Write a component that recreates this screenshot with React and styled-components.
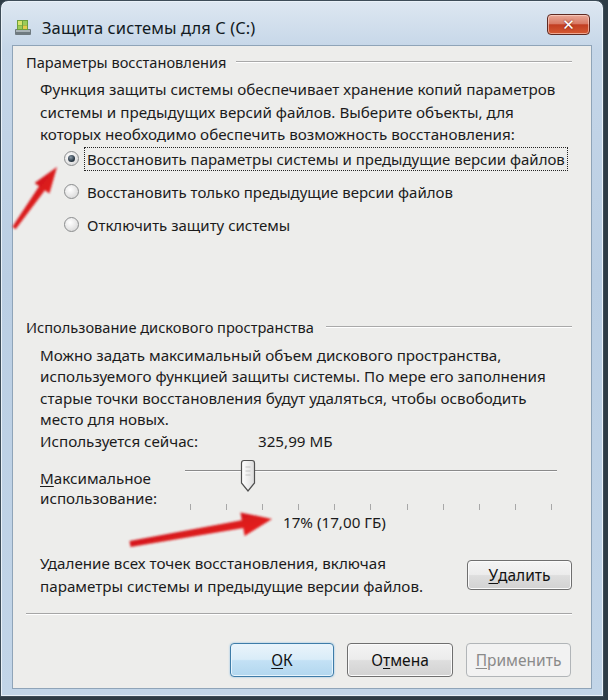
import React from "react";
import styled, { createGlobalStyle, css } from "styled-components";

const GlobalStyle = createGlobalStyle`
  html, body {
    margin: 0;
    padding: 0;
    background: #2e3c46;
  }
  body {
    width: 608px;
    height: 700px;
    overflow: hidden;
    position: relative;
    font-family: "Noto Sans", "Open Sans", sans-serif;
    color: #1b1b1b;
  }
`;

const Window = styled.div`
  width: 604px;
  height: 697px;
  box-sizing: border-box;
  border: 1px solid #3d4c58;
  border-radius: 8px 8px 0 0;
  background: linear-gradient(
    180deg,
    #dde7f1 0%,
    #c5d6e8 7%,
    #bacee3 40%,
    #c2d5e8 100%
  );
  box-shadow: inset 0 0 0 1px #e9f1f8;
  display: flex;
  flex-direction: column;
  padding: 0 11px 7px;
`;

const TitleBar = styled.div`
  height: 44px;
  flex: none;
  display: flex;
  align-items: flex-start;
  padding-left: 2px;
`;

const TitleIcon = styled.svg`
  width: 18px;
  height: 18px;
  margin-top: 17px;
  flex: none;
`;

const TitleText = styled.div`
  margin: 15px 0 0 10px;
  font-size: 16.5px;
  color: #121a22;
  letter-spacing: 0.1px;
`;

const CloseButton = styled.div`
  margin: 13px 2px 0 auto;
  width: 43px;
  height: 21px;
  box-sizing: border-box;
  border: 1px solid #5e2a22;
  border-radius: 4px;
  background: linear-gradient(
    180deg,
    #e9a897 0%,
    #d97b66 45%,
    #c23e22 52%,
    #d55a33 100%
  );
  box-shadow: inset 0 0 0 1px rgba(255, 220, 210, 0.6);
  display: flex;
  align-items: center;
  justify-content: center;
  color: #fff;
  font-family: "DejaVu Sans", sans-serif;
  font-weight: bold;
  font-size: 15px;
  text-shadow: 0 0 2px #6e1a0c;
`;

const Client = styled.div`
  flex: 1;
  background: #ededeb;
  border: 1px solid #8fa4b8;
  padding: 6px 19px 0 13px;
  display: flex;
  flex-direction: column;
  font-size: 15.2px;
`;

const GroupHeader = styled.div`
  display: flex;
  align-items: center;
  height: 20px;
  font-size: 14.6px;
  margin-top: ${(p) => p.$top}px;
  &::after {
    content: "";
    flex: 1;
    margin-left: ${(p) => p.$gap}px;
    height: 1px;
    background: #a9a9a9;
    border-bottom: 1px solid #ffffff;
  }
`;

const Paragraph = styled.p`
  margin: ${(p) => p.$top}px 0 0 14px;
  line-height: ${(p) => p.$lh || 22}px;
  white-space: nowrap;
`;

const RadioList = styled.div`
  margin: 1px 0 0 38px;
  display: flex;
  flex-direction: column;
  gap: 9px;
`;

const RadioRow = styled.label`
  display: flex;
  align-items: center;
  gap: 5px;
  height: 24px;
  font-size: 15px;
  white-space: nowrap;
`;

const RadioCircle = styled.span`
  position: relative;
  flex: none;
  width: 13px;
  height: 13px;
  border-radius: 50%;
  border: 1px solid #8b8d8e;
  background: radial-gradient(
    circle at 40% 35%,
    #ffffff 0%,
    #e6e6e6 55%,
    #cfcfcf 100%
  );
  ${(p) =>
    p.$checked &&
    css`
      &::after {
        content: "";
        position: absolute;
        left: 3px;
        top: 3px;
        width: 7px;
        height: 7px;
        border-radius: 50%;
        background: radial-gradient(
          circle at 40% 35%,
          #8a9aa8 0%,
          #2b3a46 60%,
          #101820 100%
        );
      }
    `}
`;

const RadioText = styled.span`
  padding: 1px 2px;
  line-height: 20px;
  border: 1px ${(p) => (p.$focus ? "dotted #222" : "solid transparent")};
`;

const UsedRow = styled.div`
  display: flex;
  margin: -1px 0 0 14px;
  line-height: 22px;
`;

const UsedLabel = styled.span`
  width: 218px;
`;

const SliderRow = styled.div`
  display: flex;
  margin: 7px 0 0 14px;
`;

const SliderLabel = styled.div`
  width: 145px;
  padding-top: 9px;
  line-height: 20px;
`;

const SliderArea = styled.div`
  position: relative;
  width: 372px;
  height: 54px;
`;

const Track = styled.div`
  position: absolute;
  left: 0;
  right: 0;
  top: 11px;
  height: 1px;
  background: #8a8a8a;
  border-bottom: 1px solid #fbfbfb;
`;

const Thumb = styled.svg`
  position: absolute;
  top: 0;
  width: 16px;
  height: 34px;
`;

const Ticks = styled.div`
  position: absolute;
  left: 5px;
  right: 5px;
  top: 45px;
  display: flex;
  justify-content: space-between;
`;

const Tick = styled.span`
  width: 1px;
  height: 6px;
  background: #a8a8a8;
`;

const Percent = styled.div`
  margin: -2px 0 0 257px;
  line-height: 22px;
`;

const DeleteRow = styled.div`
  display: flex;
  align-items: center;
  justify-content: space-between;
  margin: 19px 0 0 14px;
`;

const DeleteText = styled.div`
  line-height: 23px;
`;

const Separator = styled.div`
  margin-top: 15px;
  height: 1px;
  background: #a6a6a6;
  border-bottom: 1px solid #ffffff;
`;

const ButtonBar = styled.div`
  display: flex;
  justify-content: flex-end;
  gap: 13px;
  margin-top: 28px;
  padding-right: 1px;
`;

const Button = styled.div`
  width: ${(p) => p.$w || 104}px;
  height: ${(p) => p.$h || 34}px;
  box-sizing: border-box;
  border: 1px solid #6f6f6f;
  border-radius: 4px;
  background: linear-gradient(
    180deg,
    #f4f4f4 0%,
    #ececec 48%,
    #dedede 52%,
    #d2d2d2 100%
  );
  box-shadow: inset 0 0 0 1px #fbfbfb;
  display: flex;
  align-items: center;
  justify-content: center;
  font-size: 15.5px;
  color: #111;
  ${(p) =>
    p.$default &&
    css`
      border-color: #3e7ca8;
      background: linear-gradient(
        180deg,
        #eaf4fb 0%,
        #d9ecf8 48%,
        #c3e1f5 52%,
        #b2d7ef 100%
      );
      box-shadow: inset 0 0 0 1px #e6f4fd, 0 0 2px #7fb7df;
    `}
  ${(p) =>
    p.$disabled &&
    css`
      border-color: #b1b5b8;
      background: #f2f2f2;
      box-shadow: none;
      color: #8a8a8a;
    `}
`;

const Key = styled.span`
  text-decoration: underline;
  text-underline-offset: 2px;
`;

const Overlay = styled.svg`
  position: absolute;
  left: 0;
  top: 0;
  width: 608px;
  height: 700px;
  pointer-events: none;
`;

const radios = [
  { text: "Восстановить параметры системы и предыдущие версии файлов", checked: true },
  { text: "Восстановить только предыдущие версии файлов" },
  { text: "Отключить защиту системы" },
];

export default function App() {
  const value = 17;
  return (
    <>
      <GlobalStyle />
      <Window>
        <TitleBar>
          <TitleIcon viewBox="0 0 18 18">
            <rect x="1" y="11" width="16" height="6" rx="1" fill="#6f7a80" />
            <rect x="2" y="12" width="14" height="2" fill="#a9b3b8" />
            <rect x="3" y="2" width="11" height="10" fill="#6ea03c" />
            <rect x="4" y="3" width="4" height="4" fill="#d9e36a" />
            <rect x="9" y="3" width="4" height="4" fill="#9bcb58" />
            <rect x="4" y="7.5" width="4" height="3.5" fill="#9bcb58" />
            <rect x="9" y="7.5" width="4" height="3.5" fill="#e5c94a" />
          </TitleIcon>
          <TitleText>Защита системы для C (C:)</TitleText>
          <CloseButton>✕</CloseButton>
        </TitleBar>
        <Client>
          <GroupHeader $top={0} $gap={10}>
            Параметры восстановления
          </GroupHeader>
          <Paragraph $top={6} $lh={22.5}>
            Функция защиты системы обеспечивает хранение копий параметров
            <br />
            системы и предыдущих версий файлов. Выберите объекты, для
            <br />
            которых необходимо обеспечить возможность восстановления:
          </Paragraph>
          <RadioList>
            {radios.map((r) => (
              <RadioRow key={r.text}>
                <RadioCircle $checked={r.checked} />
                <RadioText $focus={r.checked}>{r.text}</RadioText>
              </RadioRow>
            ))}
          </RadioList>
          <GroupHeader $top={80} $gap={12}>
            Использование дискового пространства
          </GroupHeader>
          <Paragraph $top={8} $lh={21.5}>
            Можно задать максимальный объем дискового пространства,
            <br />
            используемого функцией защиты системы. По мере его заполнения
            <br />
            старые точки восстановления будут удаляться, чтобы освободить
            <br />
            место для новых.
          </Paragraph>
          <UsedRow>
            <UsedLabel>Используется сейчас:</UsedLabel>
            <span>325,99 МБ</span>
          </UsedRow>
          <SliderRow>
            <SliderLabel>
              <Key>М</Key>аксимальное
              <br />
              использование:
            </SliderLabel>
            <SliderArea>
              <Track />
              <Thumb
                viewBox="0 0 16 34"
                style={{ left: `${(value / 100) * 372 - 8}px` }}
              >
                <defs>
                  <linearGradient id="thumbFill" x1="0" y1="0" x2="1" y2="0">
                    <stop offset="0" stopColor="#ffffff" />
                    <stop offset="1" stopColor="#dcdcdc" />
                  </linearGradient>
                </defs>
                <path
                  d="M1.5 4 Q1.5 1.5 4 1.5 H12 Q14.5 1.5 14.5 4 V24 L8 32 L1.5 24 Z"
                  fill="url(#thumbFill)"
                  stroke="#4f4f4f"
                  strokeWidth="1.2"
                />
                <path
                  d="M5.5 8 H10.5 M5.5 12 H10.5 M5.5 16 H10.5"
                  stroke="#c4c4c4"
                  strokeWidth="1"
                />
              </Thumb>
              <Ticks>
                {Array.from({ length: 11 }).map((_, i) => (
                  <Tick key={i} />
                ))}
              </Ticks>
            </SliderArea>
          </SliderRow>
          <Percent>17% (17,00 ГБ)</Percent>
          <DeleteRow>
            <DeleteText>
              Удаление всех точек восстановления, включая
              <br />
              параметры системы и предыдущие версии файлов.
            </DeleteText>
            <Button $w={105} $h={30}>
              <Key>У</Key>далить
            </Button>
          </DeleteRow>
          <Separator />
          <ButtonBar>
            <Button $default>
              <Key>О</Key>К
            </Button>
            <Button $w={106}>
              О<Key>т</Key>мена
            </Button>
            <Button $w={105} $disabled>
              <Key>П</Key>рименить
            </Button>
          </ButtonBar>
        </Client>
      </Window>
      <Overlay viewBox="0 0 608 700">
        <defs>
          <linearGradient id="arrowRed" x1="0" y1="0" x2="1" y2="1">
            <stop offset="0" stopColor="#b8141a" />
            <stop offset="0.6" stopColor="#e01b1f" />
            <stop offset="1" stopColor="#f02a22" />
          </linearGradient>
          <filter id="soft" x="-20%" y="-20%" width="140%" height="140%">
            <feGaussianBlur stdDeviation="0.8" />
          </filter>
        </defs>
        <path
          d="M12.4 226.8 L39.1 186.3 L34.6 183.1 L57 167 L49.4 193.5 L44.9 190.3 L15.6 229.2 Z"
          fill="url(#arrowRed)"
          filter="url(#soft)"
        />
        <path
          d="M129.5 541 L241.8 520.3 L240.4 512.4 L272 519 L244.6 536 L243.2 528.1 L130.5 547 Z"
          fill="url(#arrowRed)"
          filter="url(#soft)"
        />
      </Overlay>
    </>
  );
}
